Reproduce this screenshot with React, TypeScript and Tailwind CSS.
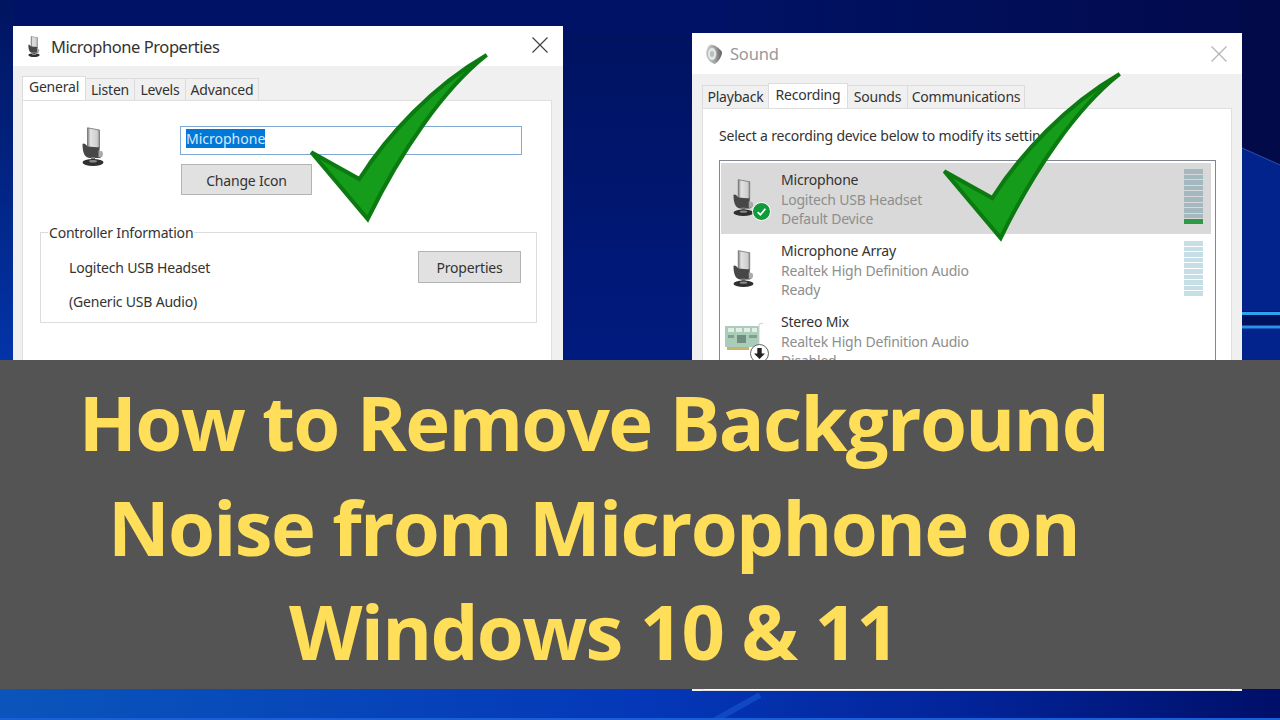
import React from 'react';

const uiFont = "font-['Noto_Sans','Open_Sans',sans-serif]";

function MicIcon({className}: {className: string}) {
    return (
        <svg viewBox="0 0 22 39" className={className}>
            <defs>
                <linearGradient id="micTop" x1="0" x2="1" y1="0" y2="0">
                    <stop offset="0" stopColor="#7d7d7d" />
                    <stop offset="0.25" stopColor="#e2e2e2" />
                    <stop offset="0.8" stopColor="#cfcfcf" />
                    <stop offset="1" stopColor="#8f8f8f" />
                </linearGradient>
            </defs>
            <path d="M5.5 0.8 L17.5 3 L17.5 21 L5.5 22 Z" fill="url(#micTop)" stroke="#6d6d6d" strokeWidth="0.8" />
            <path d="M0.5 17 C1 15.5 4 17 5.5 19.5 L17.5 20.5 L17.5 24 C21.5 24 21.5 30 17.5 31 L8 31 C3 31 0.5 26 0.5 17 Z" fill="#474747" />
            <path d="M16.5 23.5 L20.5 24.5 L20.5 29.5 L16.5 30.5 Z" fill="#ababab" />
            <rect x="9" y="30" width="4" height="4" fill="#7a7a7a" />
            <ellipse cx="11" cy="35.5" rx="10.5" ry="3.4" fill="#303030" />
            <ellipse cx="11" cy="34.3" rx="4" ry="1.2" fill="#8a8a8a" />
        </svg>
    );
}

function SpeakerIcon() {
    return (
        <svg viewBox="0 0 16 20" className="h-[20px] w-[16px] shrink-0">
            <defs>
                <linearGradient id="spk" x1="0" x2="1" y1="0" y2="0">
                    <stop offset="0" stopColor="#d8d8d8" />
                    <stop offset="0.6" stopColor="#9c9c9c" />
                    <stop offset="1" stopColor="#5f5f5f" />
                </linearGradient>
            </defs>
            <path d="M4 1 C8 0 13 4 16 8 C16 12 13 17 9 20 C5 19 0 15 0 9 C0 5 2 2 4 1 Z" fill="url(#spk)" />
            <ellipse cx="6" cy="10" rx="4.5" ry="6.5" fill="#e4e8e8" stroke="#a0a0a0" strokeWidth="0.6" />
            <ellipse cx="6" cy="10" rx="2" ry="3" fill="#b8bcbc" />
        </svg>
    );
}

function CheckMark({className}: {className: string}) {
    return (
        <svg viewBox="0 0 600 540" className={className}>
            <path
                d="M34 322 L178 402 C262 270 400 122 560 30 C430 132 302 320 203 522 Z"
                fill="#169c1b"
                stroke="#0b7a10"
                strokeWidth="12"
                strokeLinejoin="miter"
            />
        </svg>
    );
}

function CloseX({color}: {color: string}) {
    return (
        <svg viewBox="0 0 16 16" className="h-[16px] w-[16px]" fill="none" stroke={color} strokeWidth="1.2">
            <path d="M0.5 0.5 L15.5 15.5 M15.5 0.5 L0.5 15.5" />
        </svg>
    );
}

function Button({label, className}: {label: string; className: string}) {
    return (
        <div className={`flex items-center justify-center border border-[#b4b4b4] bg-[#e1e1e1] text-[#333] ${className}`}>
            {label}
        </div>
    );
}

function LevelMeter({active, className}: {active?: boolean; className: string}) {
    const segs = Array.from({length: 10});
    return (
        <div className={`flex h-[55px] w-[19px] flex-col justify-between ${className}`}>
            {segs.map((_, i) => (
                <div
                    key={i}
                    className={
                        active
                            ? i === 9
                                ? 'h-[4.5px] bg-[#2f9a45]'
                                : 'h-[4.5px] bg-[#a3b9bf]'
                            : 'h-[4.5px] bg-[#c6dfe6]'
                    }
                />
            ))}
        </div>
    );
}

function DeviceRow({name, sub, status, selected, icon, meter}: {
    name: string;
    sub: string;
    status: string;
    selected?: boolean;
    icon: React.ReactNode;
    meter?: React.ReactNode;
}) {
    return (
        <div className={`relative flex h-[71px] shrink-0 items-center ${selected ? 'bg-[#d9d9d9]' : ''}`}>
            <div className="relative h-full w-[60px] shrink-0">{icon}</div>
            <div className="flex flex-col pt-[2px] leading-[19.5px]">
                <span className="text-[#333]">{name}</span>
                <span className="text-[#8e8e8e]">{sub}</span>
                <span className="text-[#8e8e8e]">{status}</span>
            </div>
            {meter}
        </div>
    );
}

export default function App() {
    return (
        <div className={`relative h-[720px] w-[1280px] overflow-hidden bg-[linear-gradient(180deg,#00125e_0%,#001a7c_45%,#00259a_90%,#0a45b8_100%)] ${uiFont}`}>
            {/* wallpaper */}
            <svg viewBox="0 0 1280 720" className="absolute inset-0 h-full w-full">
                <defs>
                    <linearGradient id="wallBottom" x1="0" x2="1" y1="0" y2="0">
                        <stop offset="0" stopColor="#0a55bb" />
                        <stop offset="0.5" stopColor="#0438b8" />
                        <stop offset="0.75" stopColor="#02249a" />
                        <stop offset="1" stopColor="#000f68" />
                    </linearGradient>
                    <linearGradient id="wallLeft" x1="0" x2="0" y1="0" y2="1">
                        <stop offset="0" stopColor="#00145f" />
                        <stop offset="1" stopColor="#0334a8" />
                    </linearGradient>
                    <linearGradient id="wallTop" x1="0" x2="1" y1="0" y2="0">
                        <stop offset="0" stopColor="#001266" />
                        <stop offset="0.55" stopColor="#001266" />
                        <stop offset="1" stopColor="#020a4a" />
                    </linearGradient>
                </defs>
                <rect x="0" y="0" width="1280" height="34" fill="url(#wallTop)" />
                <rect x="0" y="0" width="14" height="360" fill="url(#wallLeft)" />
                <path d="M1242 0 L1280 0 L1280 165 L1242 148 Z" fill="#020a4a" />
                <path d="M1242 148 L1280 165 L1280 360 L1242 360 Z" fill="#02238c" />
                <path d="M1242 148 L1280 165" stroke="#2a52b0" strokeWidth="1" />
                <rect x="1242" y="311" width="38" height="17" fill="#00125e" />
                <rect x="1242" y="312" width="38" height="3" fill="#2fa2ee" />
                <rect x="1242" y="325.5" width="38" height="3" fill="#2a90e8" />
                <rect x="0" y="689" width="1280" height="31" fill="url(#wallBottom)" />
                <path d="M715 720 L760 695" stroke="#1048c4" strokeWidth="6" />
                <rect x="0" y="718" width="1280" height="2" fill="#1a5fd8" />
            </svg>

            {/* Microphone Properties window */}
            <div className="absolute left-[13px] top-[26px] flex h-[640px] w-[550px] flex-col bg-[#f0f0f0] text-[14px] tracking-[-0.2px]">
                <div className="flex h-[40px] shrink-0 items-center bg-white pl-[15px] pr-[15px]">
                    <MicIcon className="mr-[11px] h-[21px] w-[12px] shrink-0" />
                    <span className="pt-[2px] text-[16.5px] tracking-[-0.45px] text-[#333]">Microphone Properties</span>
                    <div className="mb-[2px] ml-auto"><CloseX color="#444" /></div>
                </div>
                <div className="relative ml-[9px] mr-[11px] mt-[11px] flex h-[23px] shrink-0 items-end text-[#333]">
                    <div className="z-10 flex h-[24px] w-[64px] items-start justify-center border border-b-0 border-[#dcdcdc] bg-white leading-[19px]">General</div>
                    <div className="flex h-[22px] w-[49px] items-center justify-center border-r border-t border-[#dcdcdc]">Listen</div>
                    <div className="flex h-[22px] w-[51px] items-center justify-center border-r border-t border-[#dcdcdc]">Levels</div>
                    <div className="flex h-[22px] w-[73px] items-center justify-center border-r border-t border-[#dcdcdc]">Advanced</div>
                </div>
                <div className="ml-[9px] mr-[11px] flex-1 border border-[#dfdfdf] bg-white text-[#333]">
                    <div className="flex pl-[59px] pt-[25px]">
                        <MicIcon className="mt-[1px] h-[39px] w-[22px] shrink-0" />
                        <div className="ml-[76px] flex flex-col">
                            <div className="flex h-[29px] w-[342px] items-start border border-[#7fa9d0] pl-[5px] pt-[2px]">
                                <span className="bg-[#0078d7] leading-[19px] tracking-normal text-[#d9e8f8]">Microphone</span>
                            </div>
                            <Button label="Change Icon" className="ml-[1px] mt-[9px] h-[31px] w-[131px] pt-[1px]" />
                        </div>
                    </div>
                    <div className="relative ml-[17px] mr-[14px] mt-[37px] h-[91px] border border-[#dcdcdc]">
                        <span className="absolute left-[7px] top-[-10px] bg-white px-[1px] leading-[20px]">Controller Information</span>
                        <div className="flex items-start justify-between pl-[28px] pr-[15px] pt-[18px]">
                            <div className="flex flex-col gap-[14px] pt-[7px] leading-[20px]">
                                <span>Logitech USB Headset</span>
                                <span>(Generic USB Audio)</span>
                            </div>
                            <Button label="Properties" className="h-[32px] w-[103px]" />
                        </div>
                    </div>
                </div>
            </div>

            {/* Sound window */}
            <div className="absolute left-[692px] top-[33px] flex h-[658px] w-[550px] flex-col bg-[#f0f0f0] text-[14px] tracking-[-0.2px]">
                <div className="flex h-[41px] shrink-0 items-center bg-white pl-[14px] pr-[15px]">
                    <SpeakerIcon />
                    <span className="ml-[8px] pt-[2px] text-[16.5px] tracking-[-0.2px] text-[#999]">Sound</span>
                    <div className="ml-auto"><CloseX color="#b4b4b4" /></div>
                </div>
                <div className="relative mx-[10px] mt-[10px] flex h-[24px] shrink-0 items-end text-[#333]">
                    <div className="flex h-[23px] w-[66px] items-center justify-center border-l border-t border-[#dcdcdc] pb-[2px]">Playback</div>
                    <div className="z-10 flex h-[25px] w-[80px] items-start justify-center border border-b-0 border-[#dcdcdc] bg-white leading-[21px]">Recording</div>
                    <div className="flex h-[23px] w-[59px] items-center justify-center border-t border-[#dcdcdc] pb-[2px]">Sounds</div>
                    <div className="flex h-[23px] w-[118px] items-center justify-center border-l border-r border-t border-[#dcdcdc] pb-[2px]">Communications</div>
                </div>
                <div className="mx-[10px] flex flex-1 flex-col overflow-hidden border border-[#dfdfdf] bg-white pl-[16px] pr-[15px] text-[#333]">
                    <p className="mt-[17px] leading-[20px]">Select a recording device below to modify its settings:</p>
                    <div className="mt-[14px] flex h-[400px] w-[497px] flex-col border border-[#828790] py-[2px] pl-[1px] pr-[4px]">
                        <DeviceRow
                            name="Microphone"
                            sub="Logitech USB Headset"
                            status="Default Device"
                            selected
                            icon={
                                <>
                                    <MicIcon className="absolute left-[12px] top-[15px] h-[39px] w-[21px]" />
                                    <div className="absolute left-[31px] top-[39px] flex h-[19px] w-[19px] items-center justify-center rounded-full border border-white bg-[#0f9a3c]">
                                        <svg viewBox="0 0 10 10" className="h-[11px] w-[11px]" fill="none" stroke="#fff" strokeWidth="1.6">
                                            <path d="M1.5 5.5 L4 8 L8.5 2.5" />
                                        </svg>
                                    </div>
                                </>
                            }
                            meter={<LevelMeter active className="absolute right-[8px] top-[6px]" />}
                        />
                        <DeviceRow
                            name="Microphone Array"
                            sub="Realtek High Definition Audio"
                            status="Ready"
                            icon={<MicIcon className="absolute left-[12px] top-[15px] h-[39px] w-[21px]" />}
                            meter={<LevelMeter className="absolute right-[8px] top-[7px]" />}
                        />
                        <DeviceRow
                            name="Stereo Mix"
                            sub="Realtek High Definition Audio"
                            status="Disabled"
                            icon={
                                <>
                                    <svg viewBox="0 0 38 30" className="absolute left-[4px] top-[17px] h-[30px] w-[38px]">
                                        <rect x="0" y="4" width="34" height="21" fill="#a9cdb9" />
                                        <rect x="3" y="6" width="6" height="4" fill="#e4ece6" />
                                        <rect x="11" y="6" width="6" height="4" fill="#e4ece6" />
                                        <rect x="19" y="6" width="6" height="4" fill="#e4ece6" />
                                        <rect x="27" y="6" width="5" height="4" fill="#e4ece6" />
                                        <rect x="3" y="13" width="6" height="3" fill="#7f9f90" />
                                        <rect x="12" y="13" width="9" height="8" fill="#6f8f80" />
                                        <rect x="24" y="13" width="8" height="3" fill="#7f9f90" />
                                        <rect x="2" y="25" width="22" height="3" fill="#c9b56a" />
                                        <path d="M34 25 L34 2 L38 1" fill="none" stroke="#cfcfcf" />
                                    </svg>
                                    <div className="absolute left-[29px] top-[39px] flex h-[19px] w-[19px] items-center justify-center rounded-full border border-[#666] bg-white">
                                        <svg viewBox="0 0 10 10" className="h-[11px] w-[11px]" fill="#222">
                                            <path d="M3 0 H7 V5 H10 L5 10 L0 5 H3 Z" />
                                        </svg>
                                    </div>
                                </>
                            }
                        />
                    </div>
                </div>
            </div>

            {/* check marks */}
            <CheckMark className="absolute left-[300px] top-[45px] h-[180px] w-[200px]" />
            <CheckMark className="absolute left-[933px] top-[64px] h-[180px] w-[200px]" />

            {/* title band */}
            <div className="absolute left-0 top-[360px] flex h-[329px] w-full flex-col items-center bg-[#545454] pr-[93px] pt-[10px] font-['Open_Sans',sans-serif] text-[76px] font-bold leading-[104.5px] tracking-[-1.7px] text-[#ffde59]">
                <span>How to Remove Background</span>
                <span>Noise from Microphone on</span>
                <span>Windows 10 &amp; 11</span>
            </div>
        </div>
    );
}
